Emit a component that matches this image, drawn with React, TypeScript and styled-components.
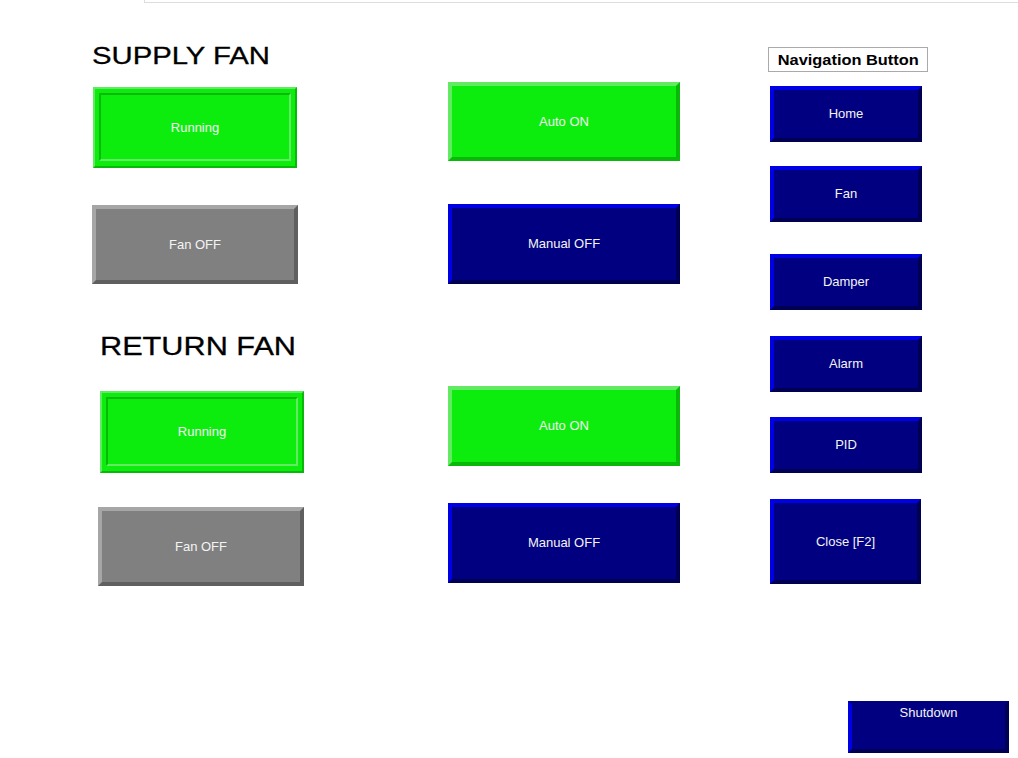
import styled, { createGlobalStyle, css } from "styled-components";

const GlobalStyle = createGlobalStyle`
  html, body {
    margin: 0;
    padding: 0;
    background: #ffffff;
  }
  body {
    font-family: "Liberation Sans", Arial, sans-serif;
  }
`;

type Tone = "green" | "gray" | "blue";

const tones = {
  green: { fill: "#0ded0d", light: "#62ea62", dark: "#09b809" },
  gray: { fill: "#808080", light: "#a6a6a6", dark: "#5f5f5f" },
  blue: { fill: "#000080", light: "#0000e4", dark: "#000052" },
};

interface BtnProps {
  $tone: Tone;
  $w: number;
  $h: number;
  $mt: number;
  $ml?: number;
  $bevel?: number;
  $top?: boolean;
}

const Btn = styled.div<BtnProps>`
  box-sizing: border-box;
  width: ${(p) => p.$w}px;
  height: ${(p) => p.$h}px;
  margin-top: ${(p) => p.$mt}px;
  margin-left: ${(p) => p.$ml ?? 0}px;
  background: ${(p) => tones[p.$tone].fill};
  border: ${(p) => p.$bevel ?? 4}px solid;
  border-color: ${(p) =>
    `${tones[p.$tone].light} ${tones[p.$tone].dark} ${tones[p.$tone].dark} ${tones[p.$tone].light}`};
  color: #f4f4f4;
  font-size: 13px;
  line-height: 15px;
  display: flex;
  justify-content: center;
  align-items: ${(p) => (p.$top ? "flex-start" : "center")};
  padding-bottom: 1px;
  ${(p) =>
    p.$top &&
    css`
      border-top-color: ${tones[p.$tone].fill};
      padding-top: 0;
    `}
  cursor: pointer;
  user-select: none;
`;

const Inset = styled.div`
  box-sizing: border-box;
  margin: 4px;
  flex: 1;
  align-self: stretch;
  border: 2px solid;
  border-color: #09b809 #62ea62 #62ea62 #09b809;
  display: flex;
  align-items: center;
  justify-content: center;
`;

const Page = styled.div`
  width: 1018px;
  height: 758px;
  overflow: hidden;
`;

const TopFrame = styled.div`
  margin-left: 144px;
  height: 2px;
  border-left: 1px solid #dddddd;
  border-bottom: 1px solid #dddddd;
`;

const Columns = styled.div`
  display: grid;
  grid-template-columns: 356px 320px 250px;
  padding-left: 92px;
`;

const Column = styled.div`
  display: flex;
  flex-direction: column;
  align-items: flex-start;
`;

const Heading = styled.div<{ $size: number; $mt: number; $ml?: number; $scale: number }>`
  margin-top: ${(p) => p.$mt}px;
  margin-left: ${(p) => p.$ml ?? 0}px;
  font-size: ${(p) => p.$size}px;
  line-height: ${(p) => p.$size}px;
  color: #000000;
  white-space: nowrap;
  -webkit-text-stroke: 0.3px #000000;
  span {
    display: inline-block;
    transform: scaleX(${(p) => p.$scale});
    transform-origin: left center;
  }
`;

const NavLabel = styled.div`
  box-sizing: border-box;
  margin-top: 44px;
  width: 160px;
  height: 25px;
  border: 1px solid #aaaaaa;
  display: flex;
  align-items: center;
  justify-content: center;
  font-size: 14px;
  font-weight: bold;
  color: #000000;
  span {
    display: inline-block;
    transform: scaleX(1.17);
  }
`;

const navItems = [
  { label: "Home", mt: 14, h: 56 },
  { label: "Fan", mt: 24, h: 56 },
  { label: "Damper", mt: 32, h: 56 },
  { label: "Alarm", mt: 26, h: 56 },
  { label: "PID", mt: 25, h: 56 },
];

export default function App() {
  return (
    <Page>
      <GlobalStyle />
      <TopFrame />
      <Columns>
        <Column>
          <Heading $size={24} $mt={41} $scale={1.22}>
            <span>SUPPLY FAN</span>
          </Heading>
          <Btn $tone="green" $w={204} $h={81} $mt={19} $ml={1} $bevel={2}>
            <Inset>Running</Inset>
          </Btn>
          <Btn $tone="gray" $w={206} $h={79} $mt={37}>
            Fan OFF
          </Btn>
          <Heading $size={26} $mt={49} $ml={8} $scale={1.18}>
            <span>RETURN FAN</span>
          </Heading>
          <Btn $tone="green" $w={204} $h={82} $mt={32} $ml={8} $bevel={2}>
            <Inset>Running</Inset>
          </Btn>
          <Btn $tone="gray" $w={206} $h={79} $mt={34} $ml={6}>
            Fan OFF
          </Btn>
        </Column>

        <Column>
          <Btn $tone="green" $w={232} $h={79} $mt={79}>
            Auto ON
          </Btn>
          <Btn $tone="blue" $w={232} $h={80} $mt={43}>
            Manual OFF
          </Btn>
          <Btn $tone="green" $w={232} $h={80} $mt={102}>
            Auto ON
          </Btn>
          <Btn $tone="blue" $w={232} $h={80} $mt={37}>
            Manual OFF
          </Btn>
        </Column>

        <Column>
          <NavLabel>
            <span>Navigation Button</span>
          </NavLabel>
          {navItems.map((n) => (
            <Btn key={n.label} $tone="blue" $w={152} $h={n.h} $mt={n.mt} $ml={2}>
              {n.label}
            </Btn>
          ))}
          <Btn $tone="blue" $w={151} $h={85} $mt={26} $ml={2}>
            Close [F2]
          </Btn>
          <Btn $tone="blue" $w={161} $h={52} $mt={117} $ml={80} $top>
            Shutdown
          </Btn>
        </Column>
      </Columns>
    </Page>
  );
}
